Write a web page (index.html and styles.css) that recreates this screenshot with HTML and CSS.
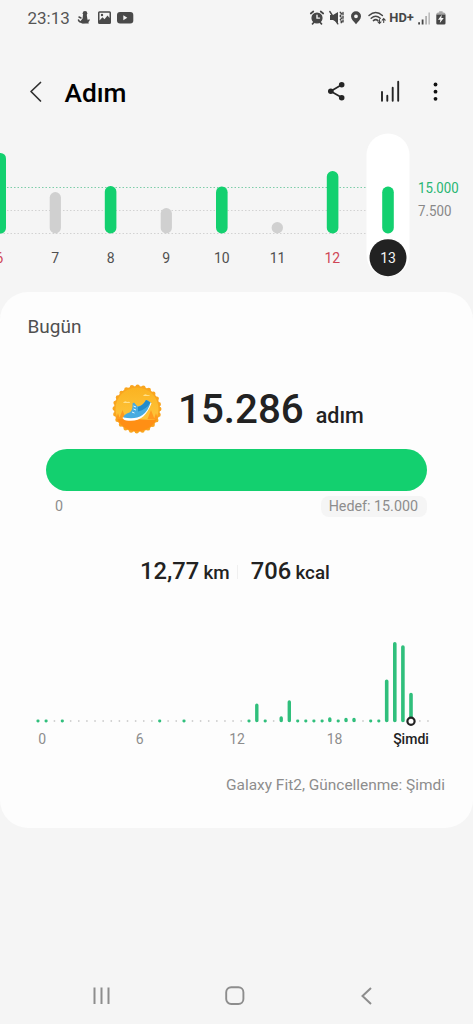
FILE: index.html
```html
<!DOCTYPE html>
<html lang="tr">
<head>
<meta charset="utf-8">
<title>Adım</title>
<link rel="stylesheet" href="styles.css">
</head>
<body>
<div class="status">
  <span class="clock">23:13</span>
  <svg class="status-left" width="58" height="18" viewBox="76 9 58 18">
    <g fill="#4a4a4a">
      <circle cx="85" cy="13.200" r="2.300"/>
      <path d="M83 14.500h3.700l.6 4 1.500 5h-7l-1.200-2.500 2-2.500z"/>
      <path d="M78.500 20c.6 3.200 9.400 3.200 10.500 0M81 18l-2-1" fill="none" stroke="#4a4a4a" stroke-width="1.500" stroke-linecap="round"/>
      <path fill-rule="evenodd" d="M99.500 11.300h10q1.500 0 1.500 1.500v9.700q0 1.500-1.500 1.500h-10q-1.500 0-1.500-1.500v-9.700q0-1.500 1.500-1.500zm0 1.500v7.700l3-3.300 2 2 3-3.700 2 2.600v-5.300z"/>
      <circle cx="102" cy="15" r="1.200"/>
      <rect x="117" y="12" width="16.300" height="11.500" rx="3"/>
    </g>
    <path d="M123.300 15.200v5l4-2.500z" fill="#f5f5f5"/>
  </svg>
  <svg class="status-right" width="140" height="20" viewBox="308 8 140 20">
    <g fill="none" stroke="#464646" stroke-width="1.400" stroke-linecap="round">
      <path d="M310.800 13.500l2.500-2M323.200 13.500l-2.500-2M312.500 23.800l1.300-1.300M321.500 23.800l-1.300-1.300" stroke-width="1.700"/>
      <circle cx="317" cy="18" r="4.900" fill="#464646"/>
      <path d="M317 15.200v2.900h2.500" stroke="#f5f5f5"/>
      <path d="M329.800 11.500l8 12.300"/>
      <path d="M340.200 12.300l1.500 1.600-1.500 2 1.500 2-1.500 2 1.500 2-1 1.500M343 12.500v10.500" stroke-dasharray="2 1.700"/>
      <path d="M369 15.500q6.700-6 13.400 0M371.200 18.200q4.500-4 9 0M373.400 20.600q2.300-2 4.600 0" stroke-width="1.500"/>
      <path d="M379.500 19.500v3.800m-1.500-1.400l1.500 1.500 1.500-1.500M383.700 22.500v-3.800m-1.500 1.400l1.500-1.500 1.500 1.500" stroke-width="1.100"/>
    </g>
    <g fill="#464646">
      <path d="M330 15h3l5-3v11l-5-3h-3z"/>
      <path fill-rule="evenodd" d="M356 11.200a5 5 0 0 1 5 5c0 3-3 5.500-5 8-2-2.500-5-5-5-8a5 5 0 0 1 5-5zm0 3.200a1.900 1.900 0 1 0 0 3.800 1.900 1.900 0 0 0 0-3.800z"/>
      <text x="389.300" y="22.300" class="hd" textLength="24.500" lengthAdjust="spacingAndGlyphs">HD+</text>
      <path d="M418.200 22.300h1.800v2.200h-1.800zM421.700 19.500h1.800v5h-1.800z"/>
      <path d="M425.200 16h1.800v8.500h-1.800zM428.500 12.500h1.300v12h-1.300z" opacity=".4"/>
      <path d="M436.300 14.500h9.200v8.700q0 1.300-1.300 1.300h-6.600q-1.300 0-1.300-1.300z"/>
      <path d="M436.300 14.500q0-2 2-2h.9v-1.300h3.400v1.300h.9q2 0 2 2z" opacity=".45"/>
    </g>
    <path d="M441.800 14.700l-3.800 5h2.400l-.6 3.300 4-4.900h-2.500z" fill="#f5f5f5"/>
  </svg>
</div>

<header class="header">
  <svg width="16" height="24" viewBox="0 0 16 24"><path d="M12.500 2.500L3 11.500l9.500 9.500" fill="none" stroke="#303030" stroke-width="1.700" stroke-linecap="round" stroke-linejoin="round"/></svg>
  <h1 class="title">Adım</h1>
  <svg class="actions" width="116" height="28" viewBox="324 78 116 28">
    <path d="M341.700 84.800L330.700 91.200l11 6.300" fill="none" stroke="#252525" stroke-width="1.700"/>
    <g fill="#252525"><circle cx="341.700" cy="84.700" r="2.800"/><circle cx="330.800" cy="91.200" r="2.800"/><circle cx="341.700" cy="97.700" r="2.800"/></g>
    <path d="M382 92v8.700M387.300 95.700v5M392.700 87.700v13M398.200 81.800v18.900" stroke="#252525" stroke-width="1.900" stroke-linecap="round"/>
    <g fill="#111"><circle cx="435.500" cy="84.500" r="1.900"/><circle cx="435.500" cy="91.700" r="1.900"/><circle cx="435.500" cy="98.800" r="1.900"/></g>
  </svg>
</header>

<svg class="week" width="473" height="162" viewBox="0 130 473 162">
  <g class="guides">
    <path d="M0 187.500H368" stroke="#7dcda8"/>
    <path d="M0 210.500H368M0 233.500H368" stroke="#d2d2d2"/>
  </g>
  <rect x="366.500" y="133.500" width="43" height="143" rx="21.500" fill="#fff"/>
  <g fill="#13d06f">
    <rect x="-6" y="153" width="12" height="80.500" rx="5.500"/>
    <rect x="104.800" y="186" width="11.600" height="47.500" rx="5.700"/>
    <rect x="216" y="186.500" width="11.600" height="47" rx="5.700"/>
    <rect x="326.800" y="171" width="11.600" height="62.500" rx="5.700"/>
    <rect x="382.200" y="186.500" width="11.600" height="47" rx="5.700"/>
  </g>
  <g fill="#d0d0d0">
    <rect x="49.700" y="192" width="11.200" height="41.500" rx="5.600"/>
    <rect x="160.700" y="208" width="11.200" height="25.500" rx="5.600"/>
    <circle cx="277.300" cy="227.700" r="5.700"/>
  </g>
  <circle cx="388" cy="257.700" r="18.500" fill="#222"/>
  <g class="days">
    <text x="-.500" y="262.700" class="holiday">6</text>
    <text x="55.200" y="262.700">7</text>
    <text x="110.700" y="262.700">8</text>
    <text x="166.200" y="262.700">9</text>
    <text x="221.800" y="262.700">10</text>
    <text x="277.500" y="262.700">11</text>
    <text x="332.300" y="262.700" class="holiday">12</text>
    <text x="388" y="262.700" class="current">13</text>
  </g>
  <text x="418" y="193.300" class="scale goal" textLength="40.700" lengthAdjust="spacingAndGlyphs">15.000</text>
  <text x="418" y="216.200" class="scale" textLength="33.500" lengthAdjust="spacingAndGlyphs">7.500</text>
</svg>

<main class="card">
  <h2 class="today">Bugün</h2>
  <div class="hero">
    <svg class="badge" width="50" height="50" viewBox="0 0 50 50">
      <defs>
        <linearGradient id="sky" x1="0" y1="0" x2="0" y2="1"><stop offset="0" stop-color="#fbb321"/><stop offset="1" stop-color="#ffcb45"/></linearGradient>
        <clipPath id="disc"><circle cx="25" cy="25" r="22.300"/></clipPath>
      </defs>
      <circle cx="25" cy="25" r="22.300" fill="none" stroke="#f9a51f" stroke-width="4.400" stroke-linecap="round" stroke-dasharray="0 5.838"/>
      <circle cx="25" cy="25" r="23" fill="#f9a51f"/>
      <circle cx="25" cy="25" r="21.500" fill="url(#sky)"/>
      <g clip-path="url(#disc)">
        <path d="M0 36q12-3 25-1t25-1v16H0z" fill="#ff8f14"/>
        <path d="M10.500 26l3.500 9H7zM39 26l3.500 9h-7zM6 29l2 6H4zM44 29l2 6h-4z" fill="#ff9a1f"/>
        <path d="M11 19q2-3 4-1 3-1 3 1zM31 12q2-3 4-1 3 0 3 1z" fill="#ffe08a"/>
      </g>
      <path d="M10.500 34q1 2.500 6 2.700 9 .8 15-4.500 5-5 8-13l-1.500-1-8 11-19 4z" fill="#fff"/>
      <path d="M11.500 33.500q0-3 6-5 3.500-2 3-9l1.500-1 3.500 4q6-1 8.500-6.500 2-.5 4.500 2.500-2 8-8 12.500-7 5-19 2.500z" fill="#48abe0"/>
      <path d="M26 23q5-1.500 8-7l4.500 2.500q-4 7-12.500 9z" fill="#238bc9"/>
      <path d="M21.500 22l2.500 1M21.500 25l2.500 1M20 28l2.500 1" stroke="#e7f7ff" stroke-width="1"/>
    </svg>
    <span class="steps">15.286</span>
    <span class="steps-unit">adım</span>
  </div>
  <div class="progress"></div>
  <div class="range">
    <span>0</span>
    <span class="target">Hedef: 15.000</span>
  </div>
  <div class="stats">
    <span class="stat">12,77 <small>km</small></span>
    <span class="divider"></span>
    <span class="stat">706 <small>kcal</small></span>
  </div>
  <svg class="hourly" width="473" height="125" viewBox="0 630 473 125">
    <path d="M38.200 721H436" stroke="#cfcfcf" stroke-width="1.800" stroke-linecap="round" stroke-dasharray="0 8.120"/>
    <g stroke="#30bf7c" stroke-width="3.600" stroke-linecap="round">
      <path stroke-width="2.800" d="M37.800 721h.4M45.900 721h.4M62.100 721h.4M159.500 721h.4M183.800 721h.4M248.800 721h.4M265 721h.4M297.500 721h.4M305.600 721h.4M313.700 721h.4M321.900 721h.4M338 721h.4M370.500 721h.4M378.600 721h.4"/>
      <path d="M256.800 705.300V720.500M281.200 718V720.500M289.300 702V720.500M329.800 719V720.500M346 719.500V720.500M354 719.500V720.500" stroke-width="3.400"/>
      <path d="M386.700 681.300V720.500M394.800 643.800V720.500M402.900 647V720.500M411 694.500V717"/>
    </g>
    <circle cx="411" cy="721.200" r="3.600" fill="#fff" stroke="#222" stroke-width="2.200"/>
    <g class="hours">
      <text x="42.300" y="744">0</text>
      <text x="139.700" y="744">6</text>
      <text x="237" y="744">12</text>
      <text x="334.500" y="744">18</text>
      <text x="411" y="744" class="now">Şimdi</text>
    </g>
  </svg>
  <p class="source">Galaxy Fit2, Güncellenme: Şimdi</p>
</main>

<nav class="navbar">
  <svg width="20" height="20" viewBox="0 0 20 20"><path d="M2.500 1.500v16.500M9.500 1.500v16.500M16.500 1.500v16.500" stroke="#8d8d8d" stroke-width="2"/></svg>
  <svg width="20" height="20" viewBox="0 0 20 20"><rect x="1.200" y="1.200" width="17.200" height="16.800" rx="5" fill="none" stroke="#8d8d8d" stroke-width="1.900"/></svg>
  <svg width="20" height="20" viewBox="0 0 20 20"><path d="M14 2L5.500 10l8.500 8" fill="none" stroke="#8d8d8d" stroke-width="2"/></svg>
</nav>
</body>
</html>
```
FILE: styles.css
```css
* { box-sizing: border-box; }
body {
  margin: 0;
  width: 473px;
  height: 1024px;
  overflow: hidden;
  display: flex;
  flex-direction: column;
  background: #f5f5f5;
  color: #222;
  font-family: Roboto, sans-serif;
}
svg { display: block; flex: none; }
h1, h2, p { margin: 0; }

.status {
  height: 36px;
  display: flex;
  align-items: center;
  padding: 0 25px 0 27.500px;
}
.clock { width: 48.500px; font-size: 17px; color: #555; }
.status-right { margin-left: auto; }
.hd { font-size: 12px; font-weight: 700; }

.header {
  height: 94px;
  display: flex;
  align-items: flex-start;
  padding: 42px 33px 0 28px;
}
.header > svg:first-child { margin-top: 2px; }
.title {
  margin-left: 20.500px;
  font-size: 26.300px;
  line-height: 30px;
  font-weight: 500;
  color: #000;
}
.actions { margin-left: auto; }

.week { overflow: hidden; }
.guides { stroke-width: 1; stroke-dasharray: 1.500 2; }
.days { font-size: 14px; text-anchor: middle; fill: #505050; }
.days .holiday { fill: #cf4656; }
.days .current { fill: #f4f4f4; }
.scale { font-size: 14px; fill: #888; }
.scale.goal { fill: #28b573; }

.card {
  height: 536px;
  display: flex;
  flex-direction: column;
  padding-top: 24px;
  border-radius: 28px;
  background: #fdfdfd;
}
.today {
  padding-left: 27.500px;
  font-size: 19px;
  line-height: 21px;
  font-weight: 400;
  color: #505050;
}
.hero {
  height: 50px;
  margin-top: 47px;
  padding-left: 112px;
  display: flex;
  align-items: baseline;
  line-height: 51px;
  font-weight: 500;
}
.badge { align-self: flex-start; }
.steps { margin-left: 16px; font-size: 40.300px; }
.steps-unit { margin-left: 12px; font-size: 21.500px; }
.progress {
  height: 41.500px;
  margin: 15px 46px 0;
  border-radius: 21px;
  background: #13d06f;
}
.range {
  margin: 5.500px 46px 0 55px;
  display: flex;
  justify-content: space-between;
  font-size: 14.300px;
  line-height: 21px;
  color: #8d8d8d;
}
.target {
  padding: 0 9px 0 8px;
  border-radius: 8px;
  background: #f5f5f5;
}
.stats {
  height: 30px;
  margin-top: 40px;
  padding-left: 140px;
  display: flex;
  align-items: center;
  line-height: 30px;
}
.stat { font-size: 23.700px; font-weight: 500; }
.stat small { font-size: 18.800px; margin-left: -1.500px; }
.divider { width: 1px; height: 14px; margin: 0 13px 0 7px; background: #f0f0f0; }
.hourly { margin-top: 43px; }
.hours { font-size: 14px; text-anchor: middle; fill: #8d8d8d; }
.hours .now { fill: #222; font-weight: 500; }
.source {
  margin-top: 19.500px;
  padding-right: 28px;
  text-align: right;
  font-size: 15.450px;
  line-height: 20px;
  color: #8d8d8d;
}

.navbar {
  margin-top: 158px;
  padding: 0 96px 0 92px;
  display: flex;
  justify-content: space-between;
}
```
